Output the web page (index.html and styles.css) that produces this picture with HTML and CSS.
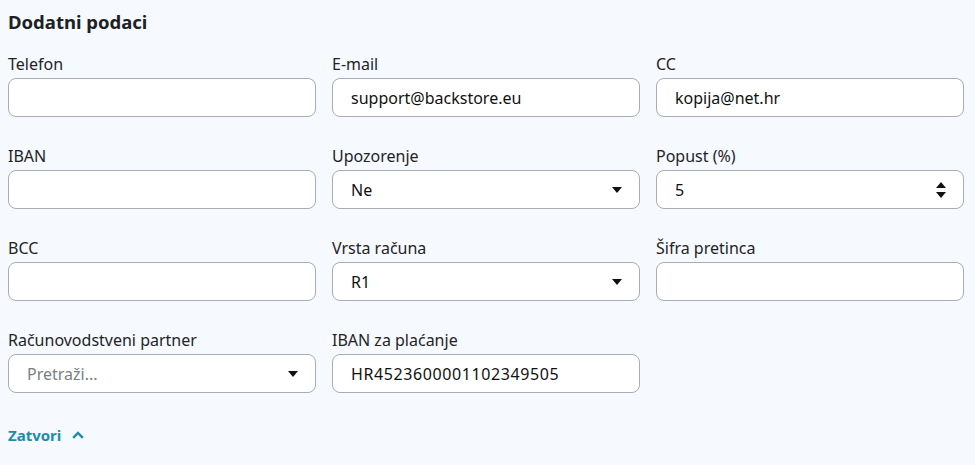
FILE: index.html
```html
<!DOCTYPE html>
<html lang="hr">
<head>
<meta charset="utf-8">
<link rel="stylesheet" href="styles.css">
</head>
<body>
<section class="panel">
  <h2 class="title">Dodatni podaci</h2>
  <div class="grid">
    <div class="field">
      <label class="label">Telefon</label>
      <div class="input"></div>
    </div>
    <div class="field">
      <label class="label">E-mail</label>
      <div class="input"><span class="value">support@backstore.eu</span></div>
    </div>
    <div class="field">
      <label class="label">CC</label>
      <div class="input"><span class="value">kopija@net.hr</span></div>
    </div>

    <div class="field">
      <label class="label">IBAN</label>
      <div class="input"></div>
    </div>
    <div class="field">
      <label class="label">Upozorenje</label>
      <div class="input select"><span class="value">Ne</span>
        <svg class="caret" width="10" height="6" viewBox="0 0 10 6"><path d="M0 0h10L5 6z" fill="#111"/></svg>
      </div>
    </div>
    <div class="field">
      <label class="label">Popust (%)</label>
      <div class="input select"><span class="value">5</span>
        <svg class="spin" width="10" height="16" viewBox="0 0 10 16"><path d="M5 0l5 6H0z M0 10h10l-5 6z" fill="#111"/></svg>
      </div>
    </div>

    <div class="field">
      <label class="label">BCC</label>
      <div class="input"></div>
    </div>
    <div class="field">
      <label class="label">Vrsta računa</label>
      <div class="input select"><span class="value">R1</span>
        <svg class="caret" width="10" height="6" viewBox="0 0 10 6"><path d="M0 0h10L5 6z" fill="#111"/></svg>
      </div>
    </div>
    <div class="field">
      <label class="label">Šifra pretinca</label>
      <div class="input"></div>
    </div>

    <div class="field">
      <label class="label">Računovodstveni partner</label>
      <div class="input select"><span class="value placeholder">Pretraži...</span>
        <svg class="caret" width="10" height="6" viewBox="0 0 10 6"><path d="M0 0h10L5 6z" fill="#111"/></svg>
      </div>
    </div>
    <div class="field">
      <label class="label">IBAN za plaćanje</label>
      <div class="input"><span class="value mono-digits">HR4523600001102349505</span></div>
    </div>
  </div>
  <a class="toggle" href="#">Zatvori
    <svg width="12" height="8" viewBox="0 0 12 8"><path d="M1.2 6.8L6 2l4.8 4.8" fill="none" stroke="#1b8cae" stroke-width="2.4"/></svg>
  </a>
</section>
</body>
</html>
```

FILE: styles.css
```css
html, body {
  margin: 0;
  padding: 0;
  background: #f6f9fd;
}
body {
  font-family: "Noto Sans", "Open Sans", sans-serif;
  color: #1f2429;
}
.panel {
  padding: 9px 11px 0 8px;
}
.title {
  margin: 0;
  font-size: 18.5px;
  font-weight: 700;
  line-height: 26px;
  color: #1c2126;
}
.grid {
  margin-top: 19px;
  display: grid;
  grid-template-columns: repeat(3, 308px);
  column-gap: 16px;
  row-gap: 29px;
}
.field {
  display: flex;
  flex-direction: column;
}
.label {
  font-size: 16px;
  line-height: 20px;
  margin-bottom: 4px;
  color: #1f2429;
}
.input {
  box-sizing: border-box;
  height: 39px;
  border: 1px solid #a8adb3;
  border-radius: 8px;
  background: #fff;
  display: flex;
  align-items: center;
  padding: 0 17px 0 18px;
}
.value {
  font-size: 16px;
  color: #111;
  flex: 1;
}
.mono-digits {
  letter-spacing: 0.6px;
}
.placeholder {
  color: #7a7f85;
}
.caret, .spin {
  flex: none;
}
.toggle {
  display: inline-flex;
  align-items: center;
  gap: 11px;
  margin-top: 32px;
  font-size: 15px;
  font-weight: 700;
  line-height: 20px;
  color: #1b8cae;
  text-decoration: none;
}
```
